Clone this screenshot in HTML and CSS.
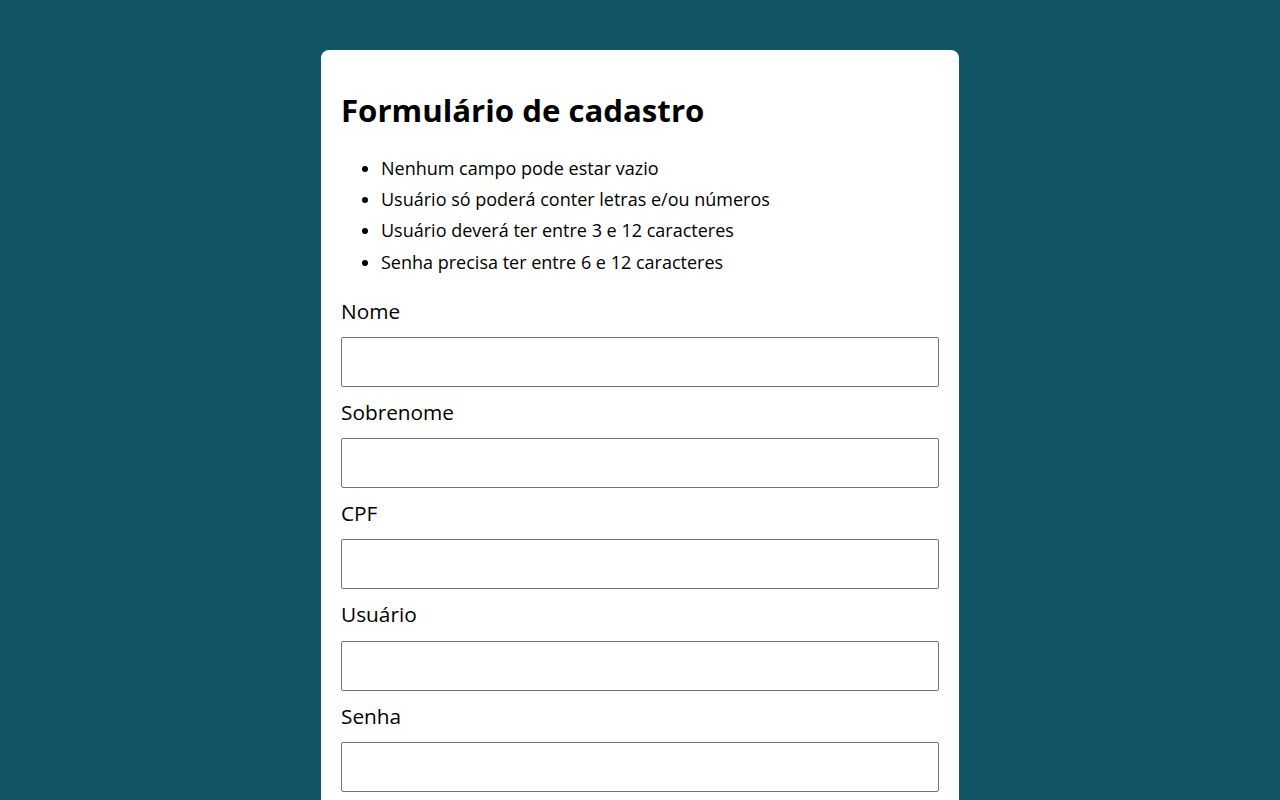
FILE: index.html
```html
<!DOCTYPE html>
<html lang="pt-BR">
<head>
<meta charset="utf-8">
<title>Formulário de cadastro</title>
<link rel="stylesheet" href="styles.css">
</head>
<body>
<main class="card">
  <h1 class="title">Formulário de cadastro</h1>
  <ul class="rules">
    <li>Nenhum campo pode estar vazio</li>
    <li>Usuário só poderá conter letras e/ou números</li>
    <li>Usuário deverá ter entre 3 e 12 caracteres</li>
    <li>Senha precisa ter entre 6 e 12 caracteres</li>
  </ul>
  <form class="form">
    <label class="field"><span class="label">Nome</span><input class="input" type="text"></label>
    <label class="field"><span class="label">Sobrenome</span><input class="input" type="text"></label>
    <label class="field"><span class="label">CPF</span><input class="input" type="text"></label>
    <label class="field"><span class="label">Usuário</span><input class="input" type="text"></label>
    <label class="field"><span class="label">Senha</span><input class="input" type="password"></label>
  </form>
</main>
</body>
</html>
```
FILE: styles.css
```css
html, body {
  margin: 0;
  padding: 0;
}
body {
  background: #115566;
  font-family: "Open Sans", sans-serif;
  color: #000;
  padding-top: 50px;
  height: 800px;
  overflow: hidden;
  box-sizing: border-box;
}
.card {
  width: 598px;
  margin: 0 auto;
  background: #fff;
  border-radius: 8px;
  padding: 20px 20px 40px;
}
.title {
  font-size: 31.2px;
  font-weight: 700;
  margin: 19px 0 21.5px;
  line-height: normal;
}
.rules {
  margin: 0 0 7.4px;
  padding-left: 40px;
  font-size: 18px;
}
.rules li {
  line-height: 31.45px;
}
.form {
  display: flex;
  flex-direction: column;
}
.field {
  display: flex;
  flex-direction: column;
}
.label {
  font-size: 20.8px;
  line-height: 28.25px;
  margin: 11px 0 12px;
}
.input {
  height: 50px;
  box-sizing: border-box;
  border: 1px solid #767676;
  border-radius: 2px;
  font-size: 16px;
  margin: 0;
}
```
